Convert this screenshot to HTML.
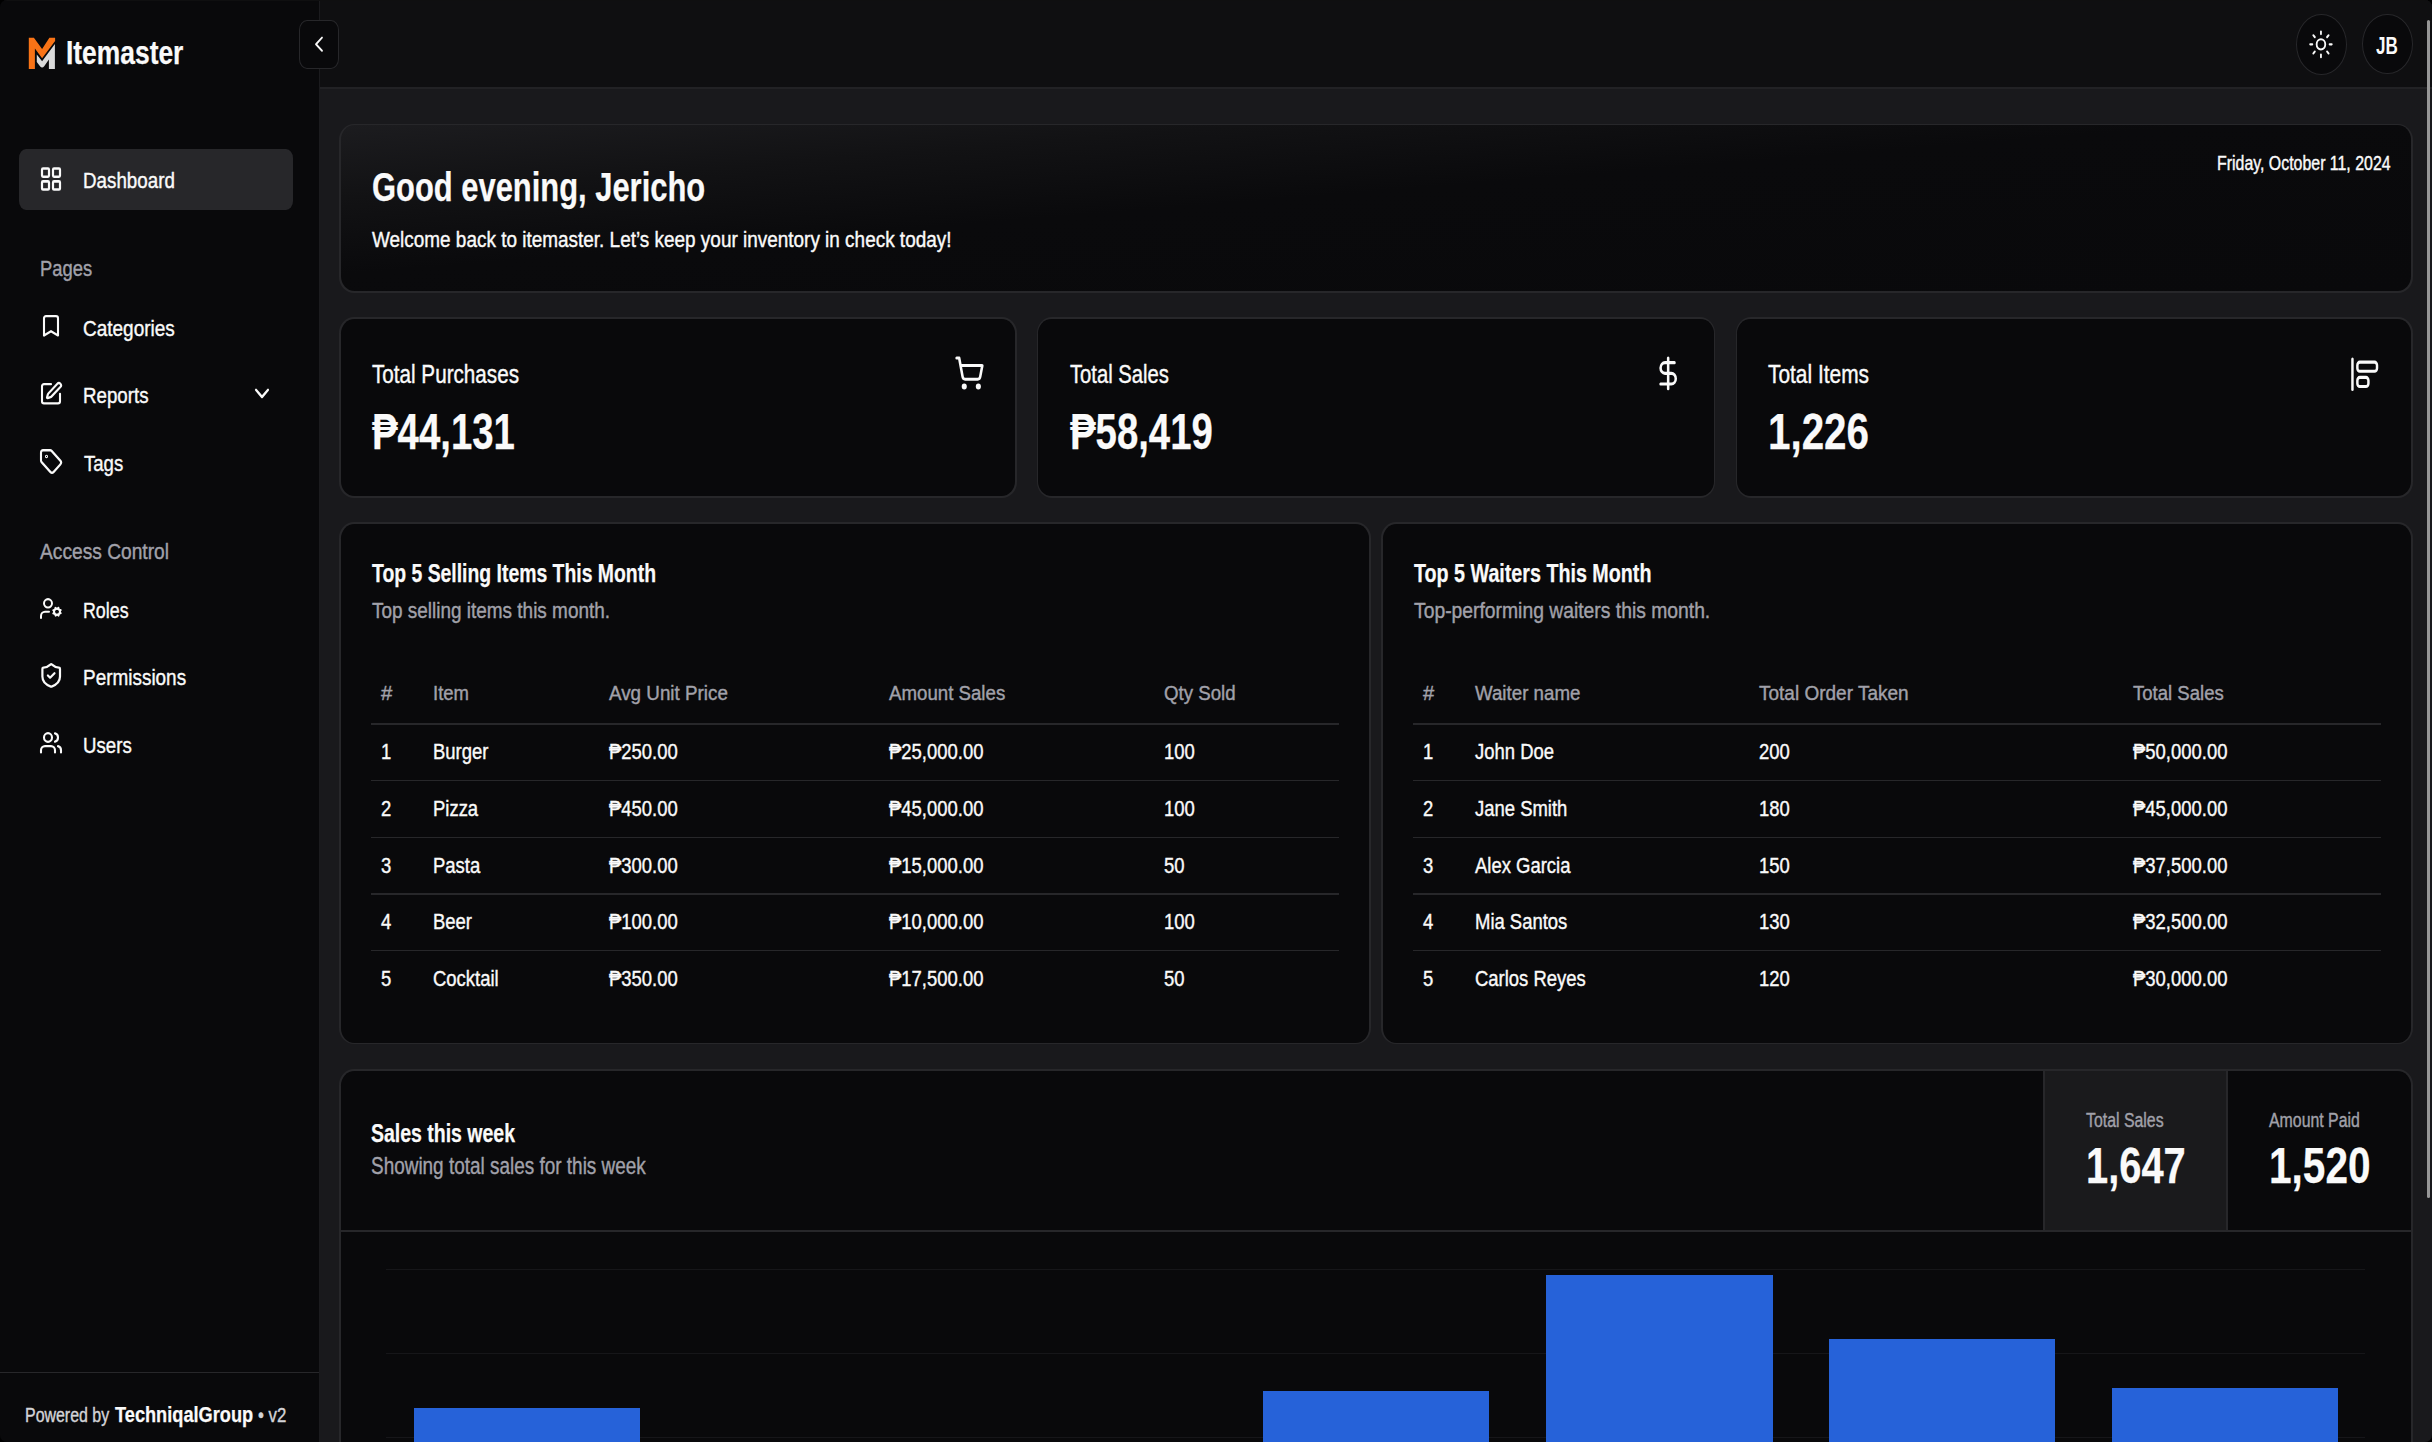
<!DOCTYPE html>
<html><head><meta charset="utf-8"><title>Itemaster Dashboard</title>
<style>
html,body{margin:0;padding:0;background:#000;}
body{width:2432px;height:1442px;overflow:hidden;position:relative;font-family:"Liberation Sans",sans-serif;}
#app{position:absolute;left:0;top:0;width:2432px;height:1442px;border-radius:7px;overflow:hidden;background:#09090b;}
.b{position:absolute;}
.t{position:absolute;white-space:nowrap;line-height:0;transform-origin:0 0;}
</style></head><body><div id="app">
<div class="b" style="left:0.00px;top:0.00px;width:319.00px;height:1442.00px;background:#09090b"></div>
<div class="b" style="left:319.00px;top:0.00px;width:2113.00px;height:1442.00px;background:#19191c"></div>
<div class="b" style="left:319.00px;top:0.00px;width:2113.00px;height:87.00px;background:#0f0f11"></div>
<div class="b" style="left:319.00px;top:87.00px;width:2113.00px;height:2.00px;background:#222225"></div>
<div class="b" style="left:318.80px;top:0.00px;width:1.20px;height:1442.00px;background:#1b1b1e"></div>
<svg class="b" style="left:24px;top:32px" width="40" height="42" viewBox="0 0 40 42"><path fill="#f97316" d="M4.8 5.8H9.9L18.1 16.9L25.4 5.8H31.1V8.9L18.1 26.2L10.9 16.4V37H4.8Z"/><path fill="#dadada" d="M12.8 22.6L18.1 29.2L30.9 12.0V37H24.9V27.6L20.2 34.2Q18.1 36.6 16 34.2L12.8 30Z"/></svg>
<div class="t" style="left:65.60px;top:52.82px;font-size:33.43px;font-weight:bold;color:#fafafa;transform:scaleX(0.7897);-webkit-text-stroke:0.25px #fafafa;">Itemaster</div>
<div class="b" style="left:19.40px;top:148.80px;width:273.70px;height:61.20px;background:#27272a;border-radius:7px/9px"></div>
<svg class="b" style="left:39.10px;top:165.06px" width="24.00" height="28.08" viewBox="0 0 24 24" preserveAspectRatio="none" fill="none" stroke="#fafafa" stroke-width="2.2" stroke-linecap="round" stroke-linejoin="round"><rect width="7" height="7" x="3" y="3" rx="1"/><rect width="7" height="7" x="14" y="3" rx="1"/><rect width="7" height="7" x="14" y="14" rx="1"/><rect width="7" height="7" x="3" y="14" rx="1"/></svg>
<div class="t" style="left:83.10px;top:180.24px;font-size:22.67px;font-weight:normal;color:#fafafa;transform:scaleX(0.8285);-webkit-text-stroke:0.4px #fafafa;">Dashboard</div>
<div class="t" style="left:39.75px;top:269.35px;font-size:21.80px;font-weight:normal;color:#a1a1aa;transform:scaleX(0.8429);-webkit-text-stroke:0.4px #a1a1aa;">Pages</div>
<svg class="b" style="left:38.60px;top:313.36px" width="24.00" height="25.68" viewBox="0 0 24 24" preserveAspectRatio="none" fill="none" stroke="#fafafa" stroke-width="2.1" stroke-linecap="round" stroke-linejoin="round"><path d="m19 21-7-4-7 4V5a2 2 0 0 1 2-2h10a2 2 0 0 1 2 2v16z"/></svg>
<div class="t" style="left:83.10px;top:327.74px;font-size:22.67px;font-weight:normal;color:#fafafa;transform:scaleX(0.8381);-webkit-text-stroke:0.4px #fafafa;">Categories</div>
<svg class="b" style="left:39.30px;top:380.66px" width="24.00" height="25.68" viewBox="0 0 24 24" preserveAspectRatio="none" fill="none" stroke="#fafafa" stroke-width="2.1" stroke-linecap="round" stroke-linejoin="round"><path d="M12 3H5a2 2 0 0 0-2 2v14a2 2 0 0 0 2 2h14a2 2 0 0 0 2-2v-7"/><path d="M18.375 2.625a1 1 0 0 1 3 3l-9.013 9.014a2 2 0 0 1-.853.505l-2.873.84a.5.5 0 0 1-.62-.62l.84-2.873a2 2 0 0 1 .506-.852z"/></svg>
<div class="t" style="left:83.10px;top:395.24px;font-size:22.67px;font-weight:normal;color:#fafafa;transform:scaleX(0.8264);-webkit-text-stroke:0.4px #fafafa;">Reports</div>
<svg class="b" style="left:249.50px;top:379.30px" width="24.00" height="28.80" viewBox="0 0 24 24" preserveAspectRatio="none" fill="none" stroke="#fafafa" stroke-width="2.1" stroke-linecap="round" stroke-linejoin="round"><path d="m6 9 6 6 6-6"/></svg>
<svg class="b" style="left:38.75px;top:447.76px" width="24.00" height="26.88" viewBox="0 0 24 24" preserveAspectRatio="none" fill="none" stroke="#fafafa" stroke-width="2.1" stroke-linecap="round" stroke-linejoin="round"><path d="M12.586 2.586A2 2 0 0 0 11.172 2H4a2 2 0 0 0-2 2v7.172a2 2 0 0 0 .586 1.414l8.704 8.704a2.426 2.426 0 0 0 3.42 0l6.58-6.58a2.426 2.426 0 0 0 0-3.42z"/><circle cx="7.5" cy="7.5" r=".5" fill="currentColor"/></svg>
<div class="t" style="left:83.75px;top:462.74px;font-size:22.67px;font-weight:normal;color:#fafafa;transform:scaleX(0.8196);-webkit-text-stroke:0.4px #fafafa;">Tags</div>
<div class="t" style="left:39.75px;top:551.85px;font-size:21.80px;font-weight:normal;color:#a1a1aa;transform:scaleX(0.8798);-webkit-text-stroke:0.4px #a1a1aa;">Access Control</div>
<svg class="b" style="left:38.60px;top:595.90px" width="24.00" height="25.20" viewBox="0 0 24 24" preserveAspectRatio="none" fill="none" stroke="#fafafa" stroke-width="2.0" stroke-linecap="round" stroke-linejoin="round"><circle cx="18" cy="15" r="3"/><circle cx="9" cy="7" r="4"/><path d="M10 15H6a4 4 0 0 0-4 4v2"/><path d="m21.7 16.4-.9-.3"/><path d="m15.2 13.9-.9-.3"/><path d="m16.6 18.7.3-.9"/><path d="m19.1 12.2.3-.9"/><path d="m19.6 18.7-.4-1"/><path d="m16.8 12.3-.4-1"/><path d="m14.3 16.6 1-.4"/><path d="m20.7 13.8 1-.4"/></svg>
<div class="t" style="left:83.10px;top:609.64px;font-size:22.67px;font-weight:normal;color:#fafafa;transform:scaleX(0.7865);-webkit-text-stroke:0.4px #fafafa;">Roles</div>
<svg class="b" style="left:37.60px;top:662.06px" width="26.40" height="26.88" viewBox="0 0 24 24" preserveAspectRatio="none" fill="none" stroke="#fafafa" stroke-width="2.0" stroke-linecap="round" stroke-linejoin="round"><path d="M20 13c0 5-3.5 7.5-7.66 8.95a1 1 0 0 1-.67-.01C7.5 20.5 4 18 4 13V6a1 1 0 0 1 1-1c2 0 4.5-1.2 6.24-2.72a1.17 1.17 0 0 1 1.52 0C14.51 3.81 17 5 19 5a1 1 0 0 1 1 1z"/><path d="m9 12 2 2 4-4"/></svg>
<div class="t" style="left:83.10px;top:677.14px;font-size:22.67px;font-weight:normal;color:#fafafa;transform:scaleX(0.8357);-webkit-text-stroke:0.4px #fafafa;">Permissions</div>
<svg class="b" style="left:38.60px;top:730.26px" width="24.00" height="25.68" viewBox="0 0 24 24" preserveAspectRatio="none" fill="none" stroke="#fafafa" stroke-width="2.1" stroke-linecap="round" stroke-linejoin="round"><path d="M16 21v-2a4 4 0 0 0-4-4H6a4 4 0 0 0-4 4v2"/><circle cx="9" cy="7" r="4"/><path d="M22 21v-2a4 4 0 0 0-3-3.87"/><path d="M16 3.13a4 4 0 0 1 0 7.75"/></svg>
<div class="t" style="left:83.10px;top:744.64px;font-size:22.67px;font-weight:normal;color:#fafafa;transform:scaleX(0.8243);-webkit-text-stroke:0.4px #fafafa;">Users</div>
<div class="b" style="left:0.00px;top:1371.50px;width:319.00px;height:1.30px;background:#27272a"></div>
<div class="t" style="left:24.90px;top:1414.85px;font-size:20.06px;font-weight:normal;color:#d4d4d8;transform:scaleX(0.7949);-webkit-text-stroke:0.4px #d4d4d8;">Powered by</div>
<div class="t" style="left:114.70px;top:1413.84px;font-size:22.97px;font-weight:bold;color:#fafafa;transform:scaleX(0.7920);-webkit-text-stroke:0.25px #fafafa;">TechniqalGroup</div>
<div class="t" style="left:258.40px;top:1414.85px;font-size:20.06px;font-weight:normal;color:#d4d4d8;transform:scaleX(0.8378);-webkit-text-stroke:0.4px #d4d4d8;">• v2</div>
<div class="b" style="left:299.40px;top:20.40px;width:39.60px;height:48.60px;background:#09090b;border:1.3px solid #27272a;border-radius:8px/10px;box-sizing:border-box"></div>
<svg class="b" style="left:307.00px;top:31.20px" width="24.00" height="26.40" viewBox="0 0 24 24" preserveAspectRatio="none" fill="none" stroke="#fafafa" stroke-width="1.8" stroke-linecap="round" stroke-linejoin="round"><path d="m15 18-6-6 6-6"/></svg>
<div class="b" style="left:2296.00px;top:13.90px;width:50.60px;height:61.00px;background:#09090b;border:1.3px solid #27272a;border-radius:50%;box-sizing:border-box"></div>
<svg class="b" style="left:2308.04px;top:28.64px" width="25.92" height="30.72" viewBox="0 0 24 24" preserveAspectRatio="none" fill="none" stroke="#fafafa" stroke-width="1.7" stroke-linecap="round" stroke-linejoin="round"><circle cx="12" cy="12" r="4"/><path d="M12 2v2"/><path d="M12 20v2"/><path d="m4.93 4.93 1.41 1.41"/><path d="m17.66 17.66 1.41 1.41"/><path d="M2 12h2"/><path d="M20 12h2"/><path d="m6.34 17.66-1.41 1.41"/><path d="m19.07 4.93-1.41 1.41"/></svg>
<div class="b" style="left:2362.00px;top:13.90px;width:50.50px;height:60.60px;background:#09090b;border:1.3px solid #27272a;border-radius:50%;box-sizing:border-box"></div>
<div class="t" style="left:2376.40px;top:46.04px;font-size:23.26px;font-weight:bold;color:#fafafa;transform:scaleX(0.7335);">JB</div>
<div class="b" style="left:339.00px;top:123.90px;width:2073.80px;height:168.90px;background:#27272a;border-radius:15px/16px;overflow:hidden"><div class="b" style="left:1.6px;top:1.6px;right:1.6px;bottom:1.6px;background:linear-gradient(to bottom right,#1c1c1f 0%,#121214 22%,#0a0a0c 45%,#09090b 100%);border-radius:13.40px/14.40px;overflow:hidden"></div></div>
<div class="t" style="left:371.90px;top:186.75px;font-size:39.97px;font-weight:bold;color:#fafafa;transform:scaleX(0.7733);-webkit-text-stroke:0.25px #fafafa;">Good evening, Jericho</div>
<div class="t" style="left:371.90px;top:239.95px;font-size:21.80px;font-weight:normal;color:#fafafa;transform:scaleX(0.8691);-webkit-text-stroke:0.4px #fafafa;">Welcome back to itemaster. Let’s keep your inventory in check today!</div>
<div class="t" style="left:2217.20px;top:162.95px;font-size:19.77px;font-weight:normal;color:#fafafa;transform:scaleX(0.8047);-webkit-text-stroke:0.4px #fafafa;">Friday, October 11, 2024</div>
<div class="b" style="left:339.00px;top:317.20px;width:677.90px;height:180.90px;background:#27272a;border-radius:15px/16px;overflow:hidden"><div class="b" style="left:1.6px;top:1.6px;right:1.6px;bottom:1.6px;background:#09090b;border-radius:13.40px/14.40px;overflow:hidden"></div></div>
<div class="t" style="left:371.60px;top:373.73px;font-size:26.16px;font-weight:normal;color:#fafafa;transform:scaleX(0.7897);-webkit-text-stroke:0.4px #fafafa;">Total Purchases</div>
<div class="t" style="left:372.10px;top:431.58px;font-size:49.42px;font-weight:bold;color:#fafafa;transform:scaleX(0.7761);-webkit-text-stroke:0.25px #fafafa;">₱44,131</div>
<div class="b" style="left:1036.70px;top:317.20px;width:678.60px;height:180.90px;background:#27272a;border-radius:15px/16px;overflow:hidden"><div class="b" style="left:1.6px;top:1.6px;right:1.6px;bottom:1.6px;background:#09090b;border-radius:13.40px/14.40px;overflow:hidden"></div></div>
<div class="t" style="left:1069.90px;top:373.73px;font-size:26.16px;font-weight:normal;color:#fafafa;transform:scaleX(0.7735);-webkit-text-stroke:0.4px #fafafa;">Total Sales</div>
<div class="t" style="left:1070.40px;top:431.58px;font-size:49.42px;font-weight:bold;color:#fafafa;transform:scaleX(0.7760);-webkit-text-stroke:0.25px #fafafa;">₱58,419</div>
<div class="b" style="left:1735.70px;top:317.20px;width:677.10px;height:180.90px;background:#27272a;border-radius:15px/16px;overflow:hidden"><div class="b" style="left:1.6px;top:1.6px;right:1.6px;bottom:1.6px;background:#09090b;border-radius:13.40px/14.40px;overflow:hidden"></div></div>
<div class="t" style="left:1767.60px;top:373.73px;font-size:26.16px;font-weight:normal;color:#fafafa;transform:scaleX(0.7984);-webkit-text-stroke:0.4px #fafafa;">Total Items</div>
<div class="t" style="left:1768.10px;top:431.58px;font-size:49.42px;font-weight:bold;color:#fafafa;transform:scaleX(0.8169);-webkit-text-stroke:0.25px #fafafa;">1,226</div>
<svg class="b" style="left:953.52px;top:355.33px" width="30.77" height="36.14" viewBox="0 0 24 24" preserveAspectRatio="none" fill="none" stroke="#fafafa" stroke-width="2" stroke-linecap="round" stroke-linejoin="round"><circle cx="8" cy="21" r="1"/><circle cx="19" cy="21" r="1"/><path d="M2.05 2.05h2l2.66 12.42a2 2 0 0 0 2 1.58h9.78a2 2 0 0 0 1.95-1.57l1.65-7.43H5.12"/></svg>
<svg class="b" style="left:1653.13px;top:355.39px" width="30.34" height="36.72" viewBox="0 0 24 24" preserveAspectRatio="none" fill="none" stroke="#fafafa" stroke-width="2" stroke-linecap="round" stroke-linejoin="round"><line x1="12" x2="12" y1="2" y2="22"/><path d="M17 5H9.5a3.5 3.5 0 0 0 0 7h5a3.5 3.5 0 0 1 0 7H6"/></svg>
<svg class="b" style="left:2350.26px;top:355.68px" width="29.47" height="36.65" viewBox="0 0 24 24" preserveAspectRatio="none" fill="none" stroke="#fafafa" stroke-width="2" stroke-linecap="round" stroke-linejoin="round"><rect width="9" height="6" x="6" y="14" rx="2"/><rect width="16" height="6" x="6" y="4" rx="2"/><path d="M2 2v20"/></svg>
<div class="b" style="left:339.00px;top:522.30px;width:1032.00px;height:522.20px;background:#27272a;border-radius:15px/16px;overflow:hidden"><div class="b" style="left:1.6px;top:1.6px;right:1.6px;bottom:1.6px;background:#09090b;border-radius:13.40px/14.40px;overflow:hidden"></div></div>
<div class="t" style="left:371.90px;top:573.38px;font-size:26.31px;font-weight:bold;color:#fafafa;transform:scaleX(0.7372);-webkit-text-stroke:0.25px #fafafa;">Top 5 Selling Items This Month</div>
<div class="t" style="left:371.90px;top:611.20px;font-size:21.80px;font-weight:normal;color:#a1a1aa;transform:scaleX(0.8694);-webkit-text-stroke:0.4px #a1a1aa;">Top selling items this month.</div>
<div class="t" style="left:381.00px;top:692.95px;font-size:20.35px;font-weight:normal;color:#a1a1aa;transform:scaleX(0.9988);-webkit-text-stroke:0.4px #a1a1aa;">#</div>
<div class="t" style="left:432.75px;top:692.95px;font-size:20.35px;font-weight:normal;color:#a1a1aa;transform:scaleX(0.9096);-webkit-text-stroke:0.4px #a1a1aa;">Item</div>
<div class="t" style="left:609.00px;top:692.95px;font-size:20.35px;font-weight:normal;color:#a1a1aa;transform:scaleX(0.9250);-webkit-text-stroke:0.4px #a1a1aa;">Avg Unit Price</div>
<div class="t" style="left:888.75px;top:692.95px;font-size:20.35px;font-weight:normal;color:#a1a1aa;transform:scaleX(0.9176);-webkit-text-stroke:0.4px #a1a1aa;">Amount Sales</div>
<div class="t" style="left:1164.00px;top:692.95px;font-size:20.35px;font-weight:normal;color:#a1a1aa;transform:scaleX(0.9175);-webkit-text-stroke:0.4px #a1a1aa;">Qty Sold</div>
<div class="b" style="left:370.90px;top:723.40px;width:968.20px;height:1.30px;background:#27272a"></div>
<div class="b" style="left:370.90px;top:780.00px;width:968.20px;height:1.30px;background:#27272a"></div>
<div class="b" style="left:370.90px;top:836.70px;width:968.20px;height:1.30px;background:#27272a"></div>
<div class="b" style="left:370.90px;top:893.40px;width:968.20px;height:1.30px;background:#27272a"></div>
<div class="b" style="left:370.90px;top:950.10px;width:968.20px;height:1.30px;background:#27272a"></div>
<div class="t" style="left:381.00px;top:752.24px;font-size:22.38px;font-weight:normal;color:#fafafa;transform:scaleX(0.8250);-webkit-text-stroke:0.4px #fafafa;">1</div>
<div class="t" style="left:432.75px;top:752.24px;font-size:22.38px;font-weight:normal;color:#fafafa;transform:scaleX(0.8250);-webkit-text-stroke:0.4px #fafafa;">Burger</div>
<div class="t" style="left:609.00px;top:752.24px;font-size:22.38px;font-weight:normal;color:#fafafa;transform:scaleX(0.8250);-webkit-text-stroke:0.4px #fafafa;">₱250.00</div>
<div class="t" style="left:888.75px;top:752.24px;font-size:22.38px;font-weight:normal;color:#fafafa;transform:scaleX(0.8250);-webkit-text-stroke:0.4px #fafafa;">₱25,000.00</div>
<div class="t" style="left:1164.00px;top:752.24px;font-size:22.38px;font-weight:normal;color:#fafafa;transform:scaleX(0.8250);-webkit-text-stroke:0.4px #fafafa;">100</div>
<div class="t" style="left:381.00px;top:808.94px;font-size:22.38px;font-weight:normal;color:#fafafa;transform:scaleX(0.8250);-webkit-text-stroke:0.4px #fafafa;">2</div>
<div class="t" style="left:432.75px;top:808.94px;font-size:22.38px;font-weight:normal;color:#fafafa;transform:scaleX(0.8250);-webkit-text-stroke:0.4px #fafafa;">Pizza</div>
<div class="t" style="left:609.00px;top:808.94px;font-size:22.38px;font-weight:normal;color:#fafafa;transform:scaleX(0.8250);-webkit-text-stroke:0.4px #fafafa;">₱450.00</div>
<div class="t" style="left:888.75px;top:808.94px;font-size:22.38px;font-weight:normal;color:#fafafa;transform:scaleX(0.8250);-webkit-text-stroke:0.4px #fafafa;">₱45,000.00</div>
<div class="t" style="left:1164.00px;top:808.94px;font-size:22.38px;font-weight:normal;color:#fafafa;transform:scaleX(0.8250);-webkit-text-stroke:0.4px #fafafa;">100</div>
<div class="t" style="left:381.00px;top:865.64px;font-size:22.38px;font-weight:normal;color:#fafafa;transform:scaleX(0.8250);-webkit-text-stroke:0.4px #fafafa;">3</div>
<div class="t" style="left:432.75px;top:865.64px;font-size:22.38px;font-weight:normal;color:#fafafa;transform:scaleX(0.8250);-webkit-text-stroke:0.4px #fafafa;">Pasta</div>
<div class="t" style="left:609.00px;top:865.64px;font-size:22.38px;font-weight:normal;color:#fafafa;transform:scaleX(0.8250);-webkit-text-stroke:0.4px #fafafa;">₱300.00</div>
<div class="t" style="left:888.75px;top:865.64px;font-size:22.38px;font-weight:normal;color:#fafafa;transform:scaleX(0.8250);-webkit-text-stroke:0.4px #fafafa;">₱15,000.00</div>
<div class="t" style="left:1164.00px;top:865.64px;font-size:22.38px;font-weight:normal;color:#fafafa;transform:scaleX(0.8250);-webkit-text-stroke:0.4px #fafafa;">50</div>
<div class="t" style="left:381.00px;top:922.34px;font-size:22.38px;font-weight:normal;color:#fafafa;transform:scaleX(0.8250);-webkit-text-stroke:0.4px #fafafa;">4</div>
<div class="t" style="left:432.75px;top:922.34px;font-size:22.38px;font-weight:normal;color:#fafafa;transform:scaleX(0.8250);-webkit-text-stroke:0.4px #fafafa;">Beer</div>
<div class="t" style="left:609.00px;top:922.34px;font-size:22.38px;font-weight:normal;color:#fafafa;transform:scaleX(0.8250);-webkit-text-stroke:0.4px #fafafa;">₱100.00</div>
<div class="t" style="left:888.75px;top:922.34px;font-size:22.38px;font-weight:normal;color:#fafafa;transform:scaleX(0.8250);-webkit-text-stroke:0.4px #fafafa;">₱10,000.00</div>
<div class="t" style="left:1164.00px;top:922.34px;font-size:22.38px;font-weight:normal;color:#fafafa;transform:scaleX(0.8250);-webkit-text-stroke:0.4px #fafafa;">100</div>
<div class="t" style="left:381.00px;top:979.04px;font-size:22.38px;font-weight:normal;color:#fafafa;transform:scaleX(0.8250);-webkit-text-stroke:0.4px #fafafa;">5</div>
<div class="t" style="left:432.75px;top:979.04px;font-size:22.38px;font-weight:normal;color:#fafafa;transform:scaleX(0.8250);-webkit-text-stroke:0.4px #fafafa;">Cocktail</div>
<div class="t" style="left:609.00px;top:979.04px;font-size:22.38px;font-weight:normal;color:#fafafa;transform:scaleX(0.8250);-webkit-text-stroke:0.4px #fafafa;">₱350.00</div>
<div class="t" style="left:888.75px;top:979.04px;font-size:22.38px;font-weight:normal;color:#fafafa;transform:scaleX(0.8250);-webkit-text-stroke:0.4px #fafafa;">₱17,500.00</div>
<div class="t" style="left:1164.00px;top:979.04px;font-size:22.38px;font-weight:normal;color:#fafafa;transform:scaleX(0.8250);-webkit-text-stroke:0.4px #fafafa;">50</div>
<div class="b" style="left:1381.00px;top:522.30px;width:1031.80px;height:522.20px;background:#27272a;border-radius:15px/16px;overflow:hidden"><div class="b" style="left:1.6px;top:1.6px;right:1.6px;bottom:1.6px;background:#09090b;border-radius:13.40px/14.40px;overflow:hidden"></div></div>
<div class="t" style="left:1413.90px;top:573.38px;font-size:26.31px;font-weight:bold;color:#fafafa;transform:scaleX(0.7489);-webkit-text-stroke:0.25px #fafafa;">Top 5 Waiters This Month</div>
<div class="t" style="left:1413.90px;top:611.20px;font-size:21.80px;font-weight:normal;color:#a1a1aa;transform:scaleX(0.8860);-webkit-text-stroke:0.4px #a1a1aa;">Top-performing waiters this month.</div>
<div class="t" style="left:1422.90px;top:692.95px;font-size:20.35px;font-weight:normal;color:#a1a1aa;transform:scaleX(0.9899);-webkit-text-stroke:0.4px #a1a1aa;">#</div>
<div class="t" style="left:1474.60px;top:692.95px;font-size:20.35px;font-weight:normal;color:#a1a1aa;transform:scaleX(0.9198);-webkit-text-stroke:0.4px #a1a1aa;">Waiter name</div>
<div class="t" style="left:1759.10px;top:692.95px;font-size:20.35px;font-weight:normal;color:#a1a1aa;transform:scaleX(0.9342);-webkit-text-stroke:0.4px #a1a1aa;">Total Order Taken</div>
<div class="t" style="left:2132.70px;top:692.95px;font-size:20.35px;font-weight:normal;color:#a1a1aa;transform:scaleX(0.9121);-webkit-text-stroke:0.4px #a1a1aa;">Total Sales</div>
<div class="b" style="left:1413.10px;top:723.40px;width:968.30px;height:1.30px;background:#27272a"></div>
<div class="b" style="left:1413.10px;top:780.00px;width:968.30px;height:1.30px;background:#27272a"></div>
<div class="b" style="left:1413.10px;top:836.70px;width:968.30px;height:1.30px;background:#27272a"></div>
<div class="b" style="left:1413.10px;top:893.40px;width:968.30px;height:1.30px;background:#27272a"></div>
<div class="b" style="left:1413.10px;top:950.10px;width:968.30px;height:1.30px;background:#27272a"></div>
<div class="t" style="left:1422.90px;top:752.24px;font-size:22.38px;font-weight:normal;color:#fafafa;transform:scaleX(0.8250);-webkit-text-stroke:0.4px #fafafa;">1</div>
<div class="t" style="left:1474.60px;top:752.24px;font-size:22.38px;font-weight:normal;color:#fafafa;transform:scaleX(0.8250);-webkit-text-stroke:0.4px #fafafa;">John Doe</div>
<div class="t" style="left:1759.10px;top:752.24px;font-size:22.38px;font-weight:normal;color:#fafafa;transform:scaleX(0.8250);-webkit-text-stroke:0.4px #fafafa;">200</div>
<div class="t" style="left:2132.70px;top:752.24px;font-size:22.38px;font-weight:normal;color:#fafafa;transform:scaleX(0.8250);-webkit-text-stroke:0.4px #fafafa;">₱50,000.00</div>
<div class="t" style="left:1422.90px;top:808.94px;font-size:22.38px;font-weight:normal;color:#fafafa;transform:scaleX(0.8250);-webkit-text-stroke:0.4px #fafafa;">2</div>
<div class="t" style="left:1474.60px;top:808.94px;font-size:22.38px;font-weight:normal;color:#fafafa;transform:scaleX(0.8250);-webkit-text-stroke:0.4px #fafafa;">Jane Smith</div>
<div class="t" style="left:1759.10px;top:808.94px;font-size:22.38px;font-weight:normal;color:#fafafa;transform:scaleX(0.8250);-webkit-text-stroke:0.4px #fafafa;">180</div>
<div class="t" style="left:2132.70px;top:808.94px;font-size:22.38px;font-weight:normal;color:#fafafa;transform:scaleX(0.8250);-webkit-text-stroke:0.4px #fafafa;">₱45,000.00</div>
<div class="t" style="left:1422.90px;top:865.64px;font-size:22.38px;font-weight:normal;color:#fafafa;transform:scaleX(0.8250);-webkit-text-stroke:0.4px #fafafa;">3</div>
<div class="t" style="left:1474.60px;top:865.64px;font-size:22.38px;font-weight:normal;color:#fafafa;transform:scaleX(0.8250);-webkit-text-stroke:0.4px #fafafa;">Alex Garcia</div>
<div class="t" style="left:1759.10px;top:865.64px;font-size:22.38px;font-weight:normal;color:#fafafa;transform:scaleX(0.8250);-webkit-text-stroke:0.4px #fafafa;">150</div>
<div class="t" style="left:2132.70px;top:865.64px;font-size:22.38px;font-weight:normal;color:#fafafa;transform:scaleX(0.8250);-webkit-text-stroke:0.4px #fafafa;">₱37,500.00</div>
<div class="t" style="left:1422.90px;top:922.34px;font-size:22.38px;font-weight:normal;color:#fafafa;transform:scaleX(0.8250);-webkit-text-stroke:0.4px #fafafa;">4</div>
<div class="t" style="left:1474.60px;top:922.34px;font-size:22.38px;font-weight:normal;color:#fafafa;transform:scaleX(0.8250);-webkit-text-stroke:0.4px #fafafa;">Mia Santos</div>
<div class="t" style="left:1759.10px;top:922.34px;font-size:22.38px;font-weight:normal;color:#fafafa;transform:scaleX(0.8250);-webkit-text-stroke:0.4px #fafafa;">130</div>
<div class="t" style="left:2132.70px;top:922.34px;font-size:22.38px;font-weight:normal;color:#fafafa;transform:scaleX(0.8250);-webkit-text-stroke:0.4px #fafafa;">₱32,500.00</div>
<div class="t" style="left:1422.90px;top:979.04px;font-size:22.38px;font-weight:normal;color:#fafafa;transform:scaleX(0.8250);-webkit-text-stroke:0.4px #fafafa;">5</div>
<div class="t" style="left:1474.60px;top:979.04px;font-size:22.38px;font-weight:normal;color:#fafafa;transform:scaleX(0.8250);-webkit-text-stroke:0.4px #fafafa;">Carlos Reyes</div>
<div class="t" style="left:1759.10px;top:979.04px;font-size:22.38px;font-weight:normal;color:#fafafa;transform:scaleX(0.8250);-webkit-text-stroke:0.4px #fafafa;">120</div>
<div class="t" style="left:2132.70px;top:979.04px;font-size:22.38px;font-weight:normal;color:#fafafa;transform:scaleX(0.8250);-webkit-text-stroke:0.4px #fafafa;">₱30,000.00</div>
<div class="b" style="left:339.00px;top:1069.40px;width:2073.80px;height:430.60px;background:#27272a;border-radius:15px/16px;overflow:hidden"><div class="b" style="left:1.6px;top:1.6px;right:1.6px;bottom:1.6px;background:#09090b;border-radius:13.40px/14.40px;overflow:hidden"><div class="b" style="left:1702.4px;top:0;width:183.7px;height:159.3px;background:#1a1a1c"></div><div class="b" style="left:1702.4px;top:0;width:1.8px;height:159.3px;background:#27272a"></div><div class="b" style="left:1885.2px;top:0;width:1.8px;height:159.3px;background:#27272a"></div><div class="b" style="left:0;top:159.3px;width:2080px;height:1.8px;background:#27272a"></div></div></div>
<div class="t" style="left:371.30px;top:1133.04px;font-size:25.00px;font-weight:bold;color:#fafafa;transform:scaleX(0.7789);-webkit-text-stroke:0.25px #fafafa;">Sales this week</div>
<div class="t" style="left:371.30px;top:1165.89px;font-size:24.27px;font-weight:normal;color:#a1a1aa;transform:scaleX(0.7806);-webkit-text-stroke:0.4px #a1a1aa;">Showing total sales for this week</div>
<div class="t" style="left:2086.20px;top:1119.95px;font-size:20.35px;font-weight:normal;color:#a1a1aa;transform:scaleX(0.7795);-webkit-text-stroke:0.4px #a1a1aa;">Total Sales</div>
<div class="t" style="left:2086.20px;top:1165.93px;font-size:49.27px;font-weight:bold;color:#fafafa;transform:scaleX(0.8087);-webkit-text-stroke:0.25px #fafafa;">1,647</div>
<div class="t" style="left:2269.00px;top:1119.95px;font-size:20.35px;font-weight:normal;color:#a1a1aa;transform:scaleX(0.7801);-webkit-text-stroke:0.4px #a1a1aa;">Amount Paid</div>
<div class="t" style="left:2269.00px;top:1165.93px;font-size:49.27px;font-weight:bold;color:#fafafa;transform:scaleX(0.8233);-webkit-text-stroke:0.25px #fafafa;">1,520</div>
<div class="b" style="left:386.00px;top:1269.00px;width:1979.40px;height:1.30px;background:#161619"></div>
<div class="b" style="left:386.00px;top:1352.80px;width:1979.40px;height:1.30px;background:#161619"></div>
<div class="b" style="left:386.00px;top:1436.70px;width:1979.40px;height:1.30px;background:#161619"></div>
<div class="b" style="left:413.90px;top:1408.00px;width:226.40px;height:34.00px;background:#2662d9"></div>
<div class="b" style="left:1263.00px;top:1391.00px;width:226.10px;height:51.00px;background:#2662d9"></div>
<div class="b" style="left:1546.40px;top:1275.10px;width:226.20px;height:166.90px;background:#2662d9"></div>
<div class="b" style="left:1828.60px;top:1339.20px;width:226.20px;height:102.80px;background:#2662d9"></div>
<div class="b" style="left:2111.60px;top:1388.00px;width:226.20px;height:54.00px;background:#2662d9"></div>
<div class="b" style="left:0.00px;top:0.00px;width:2432.00px;height:1.20px;background:#0f0f10"></div>
<div class="b" style="left:2426.80px;top:20.10px;width:2.80px;height:1178.20px;background:#979797;border-radius:1.5px"></div>
</div></body></html>
